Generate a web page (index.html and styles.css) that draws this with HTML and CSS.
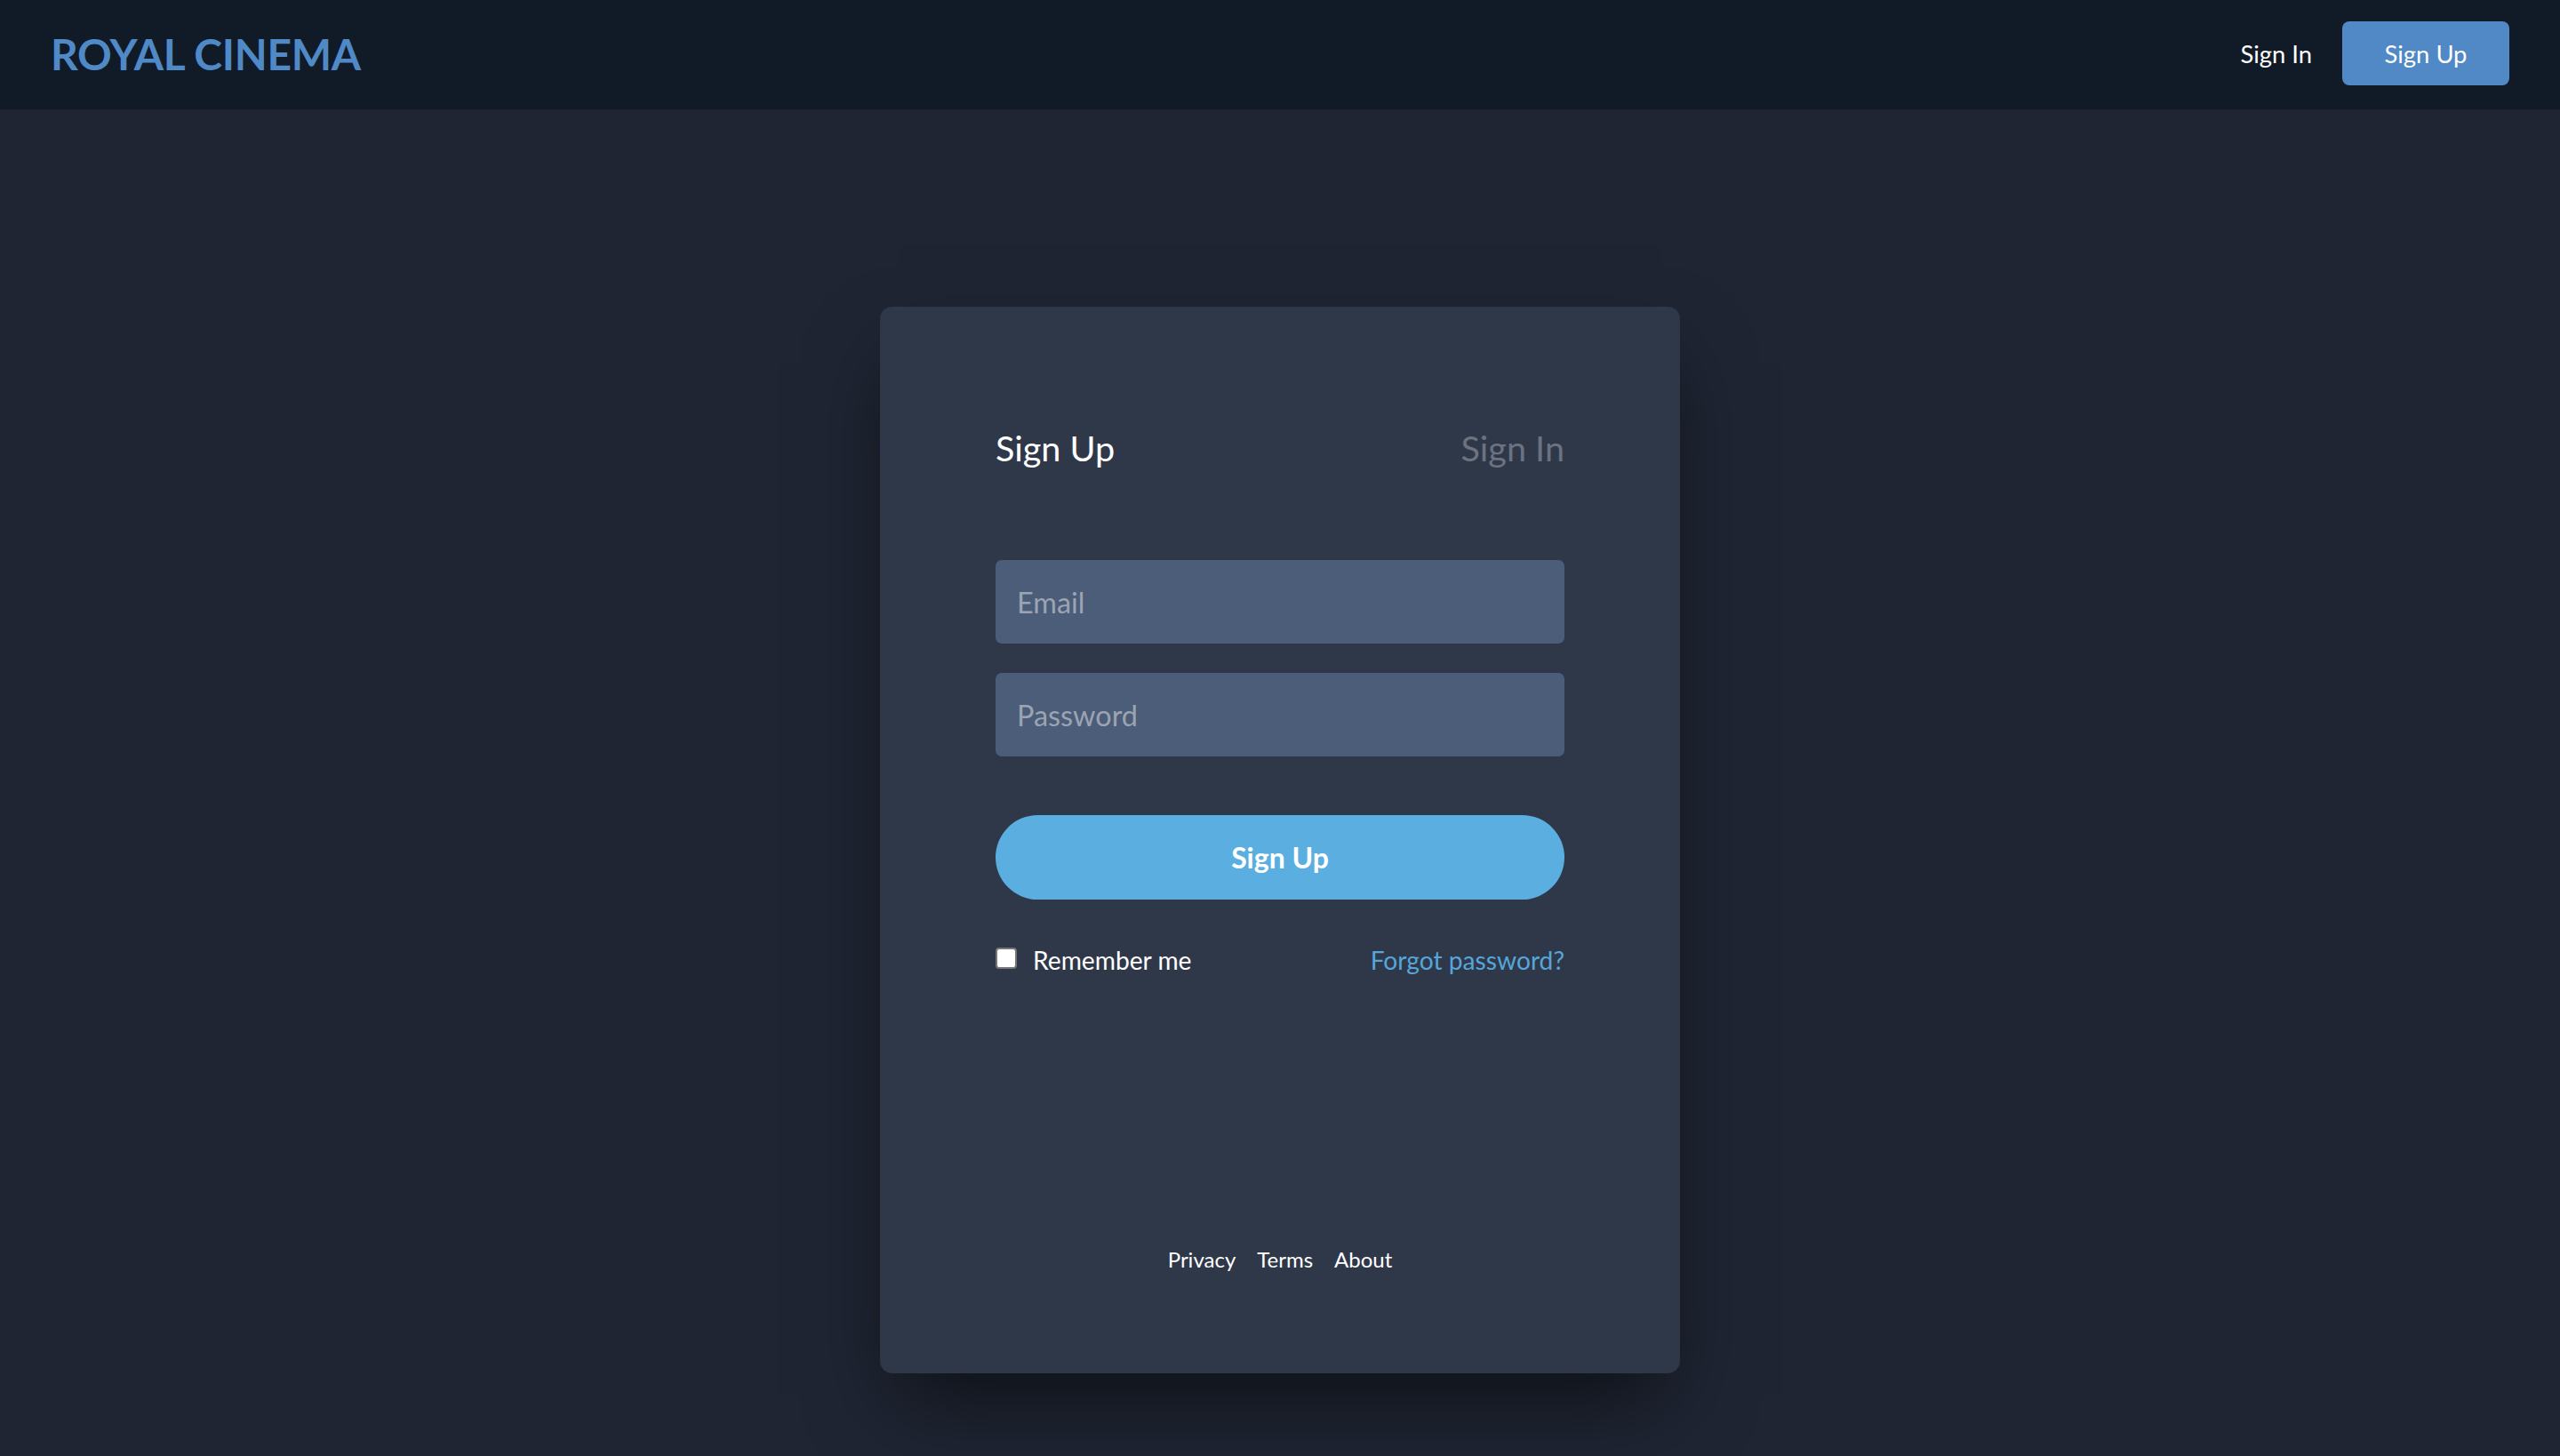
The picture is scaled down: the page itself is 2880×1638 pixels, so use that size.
FILE: index.html
```html
<!DOCTYPE html>
<html lang="en">
<head>
<meta charset="utf-8">
<title>Royal Cinema — Sign Up</title>
<link rel="stylesheet" href="styles.css">
</head>
<body>
<header class="topbar">
  <a class="logo" href="#">ROYAL CINEMA</a>
  <nav class="topnav">
    <a class="topnav-link" href="#">Sign In</a>
    <a class="topnav-btn" href="#">Sign Up</a>
  </nav>
</header>
<main class="main">
  <section class="card">
    <div class="tabs">
      <span class="tab tab-active">Sign Up</span>
      <span class="tab tab-muted">Sign In</span>
    </div>
    <form class="form">
      <input class="field" type="email" placeholder="Email">
      <input class="field" type="password" placeholder="Password">
      <button class="submit" type="button">Sign Up</button>
      <div class="options">
        <label class="remember"><input class="check" type="checkbox"><span>Remember me</span></label>
        <a class="forgot" href="#">Forgot password?</a>
      </div>
    </form>
    <footer class="card-footer">
      <a href="#">Privacy</a>
      <a href="#">Terms</a>
      <a href="#">About</a>
    </footer>
  </section>
</main>
</body>
</html>
```

FILE: styles.css
```css
* { box-sizing: border-box; }
html, body { margin: 0; padding: 0; }
body {
  background: #1f2533;
  font-family: Lato, "Noto Sans", sans-serif;
  color: #ffffff;
  min-height: 1638px;
}
a { text-decoration: none; color: inherit; }

.topbar {
  height: 123px;
  background: #111a27;
  display: flex;
  align-items: center;
  justify-content: space-between;
  padding: 0 57px 3px;
}
.logo {
  font-size: 48px;
  font-weight: 700;
  color: #4f89c6;
  letter-spacing: -0.3px;
}
.topnav { display: flex; align-items: center; gap: 34px; }
.topnav-link { font-size: 27.4px; color: #ffffff; }
.topnav-btn {
  font-size: 27.4px;
  color: #ffffff;
  background: #5089c5;
  border-radius: 8px;
  height: 72px;
  width: 188px;
  display: flex;
  align-items: center;
  justify-content: center;
}

.main {
  display: flex;
  justify-content: center;
  padding-top: 222px;
}
.card {
  width: 900px;
  height: 1200px;
  background: #2f3849;
  border-radius: 14px;
  box-shadow: 0 45px 90px -20px rgba(0, 0, 0, 0.6);
  padding: 0 130px 114px;
  display: flex;
  flex-direction: column;
}
.tabs {
  display: flex;
  justify-content: space-between;
  align-items: center;
  margin-top: 126px;
  height: 64px;
}
.tab { font-size: 39.6px; }
.tab-active { color: #ffffff; }
.tab-muted { color: #6b7280; }

.form {
  display: flex;
  flex-direction: column;
  margin-top: 95px;
}
.field {
  height: 94px;
  border: none;
  border-radius: 7px;
  background: #4b5d78;
  padding: 0 24px;
  font-family: inherit;
  font-size: 32.4px;
  color: #ffffff;
  margin-bottom: 33px;
  outline: none;
}
.field::placeholder { color: #9ba4b2; }
.submit {
  margin-top: 33px;
  height: 95px;
  border: none;
  border-radius: 48px;
  background: #5aafe0;
  color: #ffffff;
  font-family: inherit;
  font-size: 32px;
  font-weight: 700;
}
.options {
  display: flex;
  justify-content: space-between;
  align-items: center;
  margin-top: 51px;
  font-size: 28.2px;
}
.remember { display: flex; align-items: center; gap: 18px; }
.check {
  appearance: none;
  -webkit-appearance: none;
  width: 24px;
  height: 24px;
  margin: 0;
  background: #ffffff;
  border: 2px solid #767676;
  border-radius: 4px;
  position: relative;
  top: -2px;
}
.forgot { color: #56a6da; }

.card-footer {
  margin-top: auto;
  display: flex;
  justify-content: center;
  gap: 24px;
  font-size: 24px;
}
```
